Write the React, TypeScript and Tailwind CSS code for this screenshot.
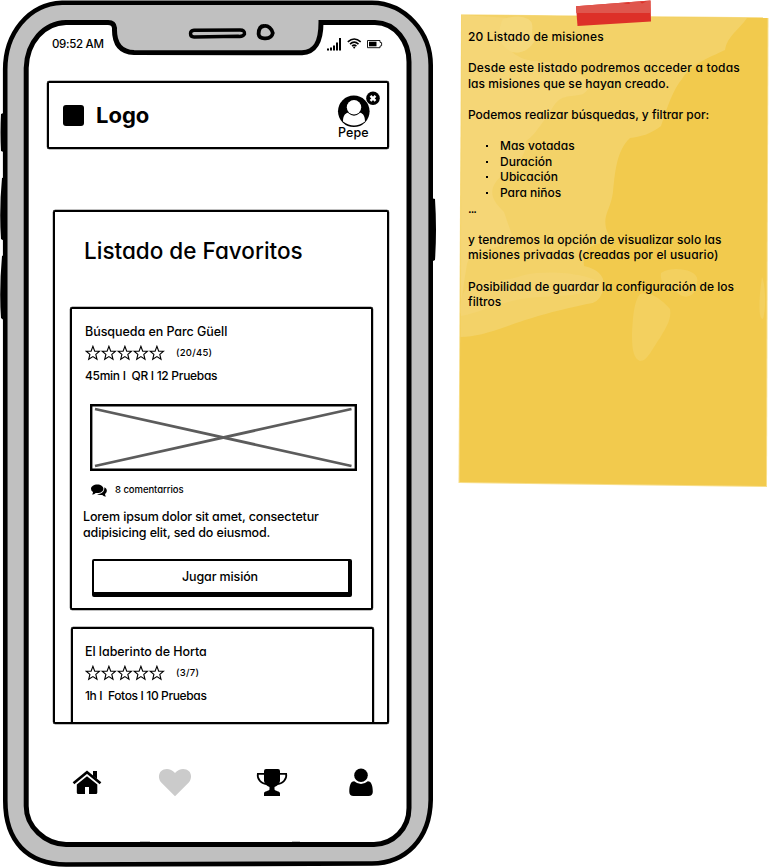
import React from "react";

function PhoneFrame() {
  return (
    <svg className="absolute inset-0" width="437" height="867" viewBox="0 0 437 867" fill="none">
      <g fill="#000">
        <path d="M1 114Q0 133 1 151L6 153V112ZM2 178Q-1 210 1 239L6 242V177ZM2 256Q-1 290 1 318L6 322V254ZM431 198L435 199Q437 230 435 260L431 262Z" />
      </g>
      <path
        d="M5.2 70C5 34 28 4 62 2.7L372 2.7C405 3 431 32 430.7 66L430.7 800C430 840 405 863 372 863.5L66 864.5C28 864 5 842 5.3 800Z"
        fill="#c0c0c0"
        stroke="#000"
        strokeWidth="4.6"
      />
      <path
        d="M26.2 68C27 42 44 23 66 22.5L107 22.5Q114 22 114.5 28C114 43 120 52 134 52.6L302 52.8C315 52 321 43 321 22.5L375 22.5C396 23 409 42 409 62L409 808C409 829 393 844 374 844.5L66 844.5C45 844 26.2 827 26.2 806Z"
        fill="#fff"
        stroke="#000"
        strokeWidth="5"
      />
      <path d="M320 20L326 20.3V25L320 24Z" fill="#000" />
      <path d="M194 30.2L240 30Q245 30 244.5 34Q243 37 238 36.3L194 37Q190.5 37 190.5 33.5Q190.5 30.4 194 30.2Z" stroke="#000" strokeWidth="3.4" />
      <path d="M264 26C268 25 272 29 272.8 33C272 37 269 38.5 265 38.3C261 38.5 259 37 258.6 34C258.7 30 260 26 264 26Z" stroke="#000" strokeWidth="3.8" />
      <path d="M140 842.8H150M292 842.8H300" stroke="#000" strokeWidth="2" />
    </svg>
  );
}

function StatusIcons() {
  return (
    <svg width="56" height="14" viewBox="327 37 56 14" fill="none">
      <path d="M327 48.5h2v2h-2zM330 47.5h2v3h-2zM333 45.5h2v5h-2zM336 42.5h2v8h-2zM339 38h2v12.5h-2z" fill="#000" />
      <path d="M347.8 41.8Q354.2 36.2 360.7 41.8M350 44.1Q354.2 40.2 358.5 44.1M352.1 46.2Q354.2 44.2 356.4 46.2" stroke="#000" strokeWidth="1.6" />
      <circle cx="354.2" cy="47.6" r="1" fill="#000" />
      <path d="M367.5 40.5h12.5v1.8l1.6.4v3l-1.6.4v1.6h-12.5z" stroke="#000" strokeWidth="0.9" />
      <path d="M369 41.7h7.5v4.6h-7.5z" fill="#000" />
    </svg>
  );
}

function Avatar() {
  return (
    <svg width="44" height="38" viewBox="337 90 44 38">
      <circle cx="353.8" cy="111.3" r="15.8" />
      <circle cx="354" cy="107.3" r="7.2" fill="#fff" />
      <path d="M343 121.5C343 116 345 113.5 347.8 112.8Q354 118.5 360.2 112.8C363 113.5 365 116 365 121.5Q354 129.5 343 121.5Z" fill="#fff" />
      <circle cx="373" cy="98.3" r="6.8" />
      <path d="M370.5 95.8l5 5M375.5 95.8l-5 5" stroke="#fff" strokeWidth="2.4" />
    </svg>
  );
}

function Stars() {
  return (
    <div className="flex w-20">
      {[0, 1, 2, 3, 4].map((i) => (
        <svg key={i} width="16" height="16" viewBox="0 0 16 16" fill="none" stroke="#000" strokeWidth="1.1">
          <path d="M7.9 1.3L9.7 6.1L14.5 6.2L10.8 9.4L12 14.3L7.9 11.6L3.7 14.3L4.9 9.4L1.2 6.2L6.1 6.1Z" />
        </svg>
      ))}
    </div>
  );
}

function MissionInfo({ title, votes, meta, metaClass }: { title: string; votes: string; meta: string; metaClass: string }) {
  return (
    <div className="flex flex-col items-start whitespace-pre">
      <div className="h-4 text-[12.5px] leading-4 tracking-[-0.05px]">{title}</div>
      <div className="mt-[5px] flex h-4 items-center">
        <Stars />
        <span className="ml-[11px] text-[9.5px] tracking-[0.25px]">{votes}</span>
      </div>
      <div className={`mt-[7px] h-4 text-[12px] leading-4 ${metaClass}`}>{meta}</div>
    </div>
  );
}

function Tabs() {
  return (
    <nav className="mt-[43px] ml-[72px] flex h-[30px] items-start">
      <svg width="30" height="30" viewBox="72 767 30 30">
        <path d="M73.5 783.2L87 772.2L100.5 783.2" fill="none" stroke="#000" strokeWidth="2.6" />
        <path d="M93 771h4v8l-4-3.2zM87 776.3L97.3 784.6V792.5Q97.3 794 95.8 794H89V787H85V794H78.3Q76.8 794 76.8 792.5V784.6Z" />
      </svg>
      <svg className="ml-14" width="34" height="30" viewBox="158 767 34 30">
        <path d="M175 796.2L161 782.2C158.3 779 158.3 774 161 771.3C165 767.5 171 768.5 175 773C179 768.5 185 767.5 189 771.3C191.7 774 191.7 779 189 782.2Z" fill="#cbcbcb" />
      </svg>
      <svg className="ml-16" width="32" height="30" viewBox="256 767 32 30">
        <path d="M264 771Q264 769 266 769H278Q280 769 280 771V781Q279 785.5 274.5 787V789.5C275 791.5 280 790.5 280 793.5V796H264V793.5C264 790.5 269 791.5 269.5 789.5V787Q265 785.5 264 781Z" />
        <path d="M264.5 773.8H257.8C257 779 261 784 267.5 784M279.5 773.8H286.2C287 779 283 784 276.5 784" fill="none" stroke="#000" strokeWidth="1.7" />
      </svg>
      <svg className="ml-[60px]" width="26" height="30" viewBox="348 767 26 30">
        <circle cx="361" cy="775.2" r="6.8" />
        <path d="M354.2 781.2Q361 786.8 367.8 781.2C371.5 781.2 372.8 786 372.8 792Q372.5 796 368.5 796H353.5Q349.5 796 349.3 792C349.3 786 350.5 781.2 354.2 781.2Z" />
      </svg>
    </nav>
  );
}

function Phone() {
  return (
    <div className="relative h-[867px] w-[437px] shrink-0 font-[450]">
      <PhoneFrame />
      <div className="relative flex h-full flex-col pt-9">
        <div className="flex h-4 items-center justify-between pr-[54px] pl-[52px]">
          <span className="pt-[2px] text-[11.5px] tracking-[-0.3px]">09:52 AM</span>
          <StatusIcons />
        </div>

        <header className="mt-[29px] ml-[47px] flex h-[68px] w-[342px] items-start rounded-[2px] border-2 border-black shadow-[0_0_0_0.2px_#000]">
          <div className="mt-[22px] ml-[14px] h-[21px] w-[21px] rounded-[3px] bg-black" />
          <span className="mt-[20px] ml-3 text-[22px] leading-6 font-bold">Logo</span>
          <div className="mt-[7px] mr-[6px] ml-auto flex w-11 flex-col items-start">
            <Avatar />
            <span className="mt-[-3px] ml-[1px] text-[12.5px] leading-4 tracking-[0.1px]">Pepe</span>
          </div>
        </header>

        <main className="mt-[61px] ml-[53px] flex h-[514px] w-[336px] flex-col overflow-hidden rounded-[2px] border-2 border-black shadow-[0_0_0_0.2px_#000]">
          <h1 className="mt-[23px] ml-[29px] text-[22.5px] leading-8 font-medium">Listado de Favoritos</h1>
          <article className="mt-10 ml-[15px] flex h-[303px] w-[303px] shrink-0 flex-col rounded-[2px] border-2 border-black shadow-[0_0_0_0.2px_#000]">
            <div className="mt-[15px] ml-[13px]">
              <MissionInfo title="Búsqueda en Parc Güell" votes="(20/45)" meta="45min I  QR I 12 Pruebas" metaClass="tracking-[-0.29px]" />
            </div>
            <div className="mt-5 ml-[18px] h-[67px] w-[267px] border-[2.5px] border-black shadow-[inset_0_0_0_0.4px_#000]">
              <svg className="h-full w-full" viewBox="0 0 263 63" stroke="#5c5c5c" strokeWidth="2.8">
                <path d="M3 3L259.5 60M3 60L259.5 3" />
              </svg>
            </div>
            <div className="mt-[11px] ml-[19px] flex h-4 items-center">
              <svg width="16" height="13" viewBox="0 0 16 13">
                <path d="M6.3.4C9.8.4 12.4 2.3 12.4 4.7S9.8 9.1 6.3 9.1L4.7 9Q3.2 10.6 1 10.6Q2.1 9.5 2 8.1Q0 6.8 0 4.7C0 2.3 2.8.4 6.3.4Z" />
                <path d="M13.4 3.3C16.6 5 16.5 8.3 14 9.9Q14 11.5 15.2 12.4Q12.7 12.4 11.3 10.9Q8 11.4 6 10.1C10 10.2 13.6 7.8 13.4 3.3Z" />
              </svg>
              <span className="ml-2 text-[9.5px] tracking-[-0.05px]">8 comentarrios</span>
            </div>
            <p className="mt-[11px] ml-[11px] text-[12.5px] leading-4 tracking-[-0.14px] whitespace-pre">{"Lorem ipsum dolor sit amet, consectetur\nadipisicing elit, sed do eiusmod."}</p>
            <button className="mt-[18px] ml-5 flex h-[38px] w-[260px] items-center justify-center rounded-[2px] border-t-2 border-r-[4px] border-b-[5px] border-l-2 border-black pt-[2px] pr-[2px] text-[12.5px] tracking-[-0.14px]">Jugar misión</button>
          </article>
          <article className="mt-[17px] ml-4 h-[120px] w-[303px] shrink-0 rounded-[2px] border-2 border-black shadow-[0_0_0_0.2px_#000]">
            <div className="mt-[15px] ml-3">
              <MissionInfo title="El laberinto de Horta" votes="(3/7)" meta="1h I  Fotos I 10 Pruebas" metaClass="tracking-[-0.36px]" />
            </div>
          </article>
        </main>
        <Tabs />
      </div>
    </div>
  );
}

function Note() {
  return (
    <div className="relative h-[490px] w-[311px] shrink-0">
      <svg className="absolute inset-0" width="311" height="490" viewBox="458 0 311 490">
        <path d="M461 14.3L768.5 17.3L767 487L458.5 483Z" fill="#f8df8d" />
        <path d="M461.5 15L767.5 18L766 486L459.5 482Z" fill="#f2ca4d" />
        <path d="M461.5 15L747 18C739 30 727 36 725 50C711 57 692 63 682 79C673 90 668 105 661 126C651 134 640 137 630 138C616 151 615 174 613 192C611 209 603 214 606 228C608 236 613 240 614 244C590 239 582 253 584 266C602 270 607 280 602 293Q598 304 587 304C550 312 530 318 508 326C488 333 474 337 460.5 337Z" fill="#f3d268" />
        <path d="M461.5 15L528 19C537 25 528 33 535 40C530 49 523 54 512 52C528 66 550 59 571 67C585 77 596 85 583 94C570 98 559 92 550 113C537 129 535 135 526 141C528 157 512 166 505 173C483 190 494 202 504 212L514 241C499 249 470 249 467 264C464 283 461 299 461 316Z" fill="#f5d676" />
        <path d="M467 288C485 280 506 282 524 275C553 269 592 275 602 284C585 299 555 294 521 299C495 304 481 312 461 316C459 302 463 292 467 288Z" fill="#f4d471" />
        <path d="M503 19Q520 14 528 19C537 25 528 33 535 40C530 49 523 54 512 52Q500 47 499 34Q500 24 503 19Z" fill="#f5d97c" />
        <path d="M640 294C650 291 661 299 670 309C672 320 665 329 660 338C653 347 648 361 640 361C632 358 632 343 632 333C633 316 634 301 640 294ZM661 273C672 265 701 270 697 282C698 293 688 301 679 294C673 288 659 287 661 273ZM762 277C766 286 766 310 763 319C757 319 760 290 762 277Z" fill="#f3d05f" />
        <path d="M576 6.3L650.5 0.6L651 21.5L577.5 26Z" fill="#dd3028" />
        <path d="M576 6.3L650.5 0.6V13H576.3Z" fill="#df564d" />
        <path d="M623 3.5L629 2.2L630 4ZM640 1.8L647 1.2L642 3.5Z" fill="#dd3028" />
      </svg>
      <div className="relative pt-[29px] pl-[10px] text-[12px] leading-[15.6px] font-medium whitespace-pre">
        <p className="tracking-[0.14px]">20 Listado de misiones</p>
        <p className="mt-[15.6px] tracking-[0.18px]">Desde este listado podremos acceder a todas</p>
        <p className="tracking-[0.06px]">las misiones que se hayan creado.</p>
        <p className="mt-[15.6px] tracking-[-0.02px]">Podemos realizar búsquedas, y filtrar por:</p>
        <ul className="mt-[15.6px]">
          {["Mas votadas", "Duración", "Ubicación", "Para niños"].map((t) => (
            <li key={t} className="flex items-center">
              <span className="ml-[18px] h-[2px] w-[2px] bg-black" />
              <span className="ml-3">{t}</span>
            </li>
          ))}
        </ul>
        <p className="tracking-[-1px]">...</p>
        <p className="mt-[15.6px] tracking-[0.05px]">y tendremos la opción de visualizar solo las</p>
        <p className="tracking-[0.1px]">misiones privadas (creadas por el usuario)</p>
        <p className="mt-[15.6px] tracking-[0.04px]">{"Posibilidad de guardar la configuración de los\nfiltros"}</p>
      </div>
    </div>
  );
}

export default function App() {
  return (
    <div className="flex h-[867px] w-[769px] gap-[21px] overflow-hidden bg-white font-['Inter','Noto_Sans',sans-serif] text-black [font-feature-settings:'cv11']">
      <Phone />
      <Note />
    </div>
  );
}
